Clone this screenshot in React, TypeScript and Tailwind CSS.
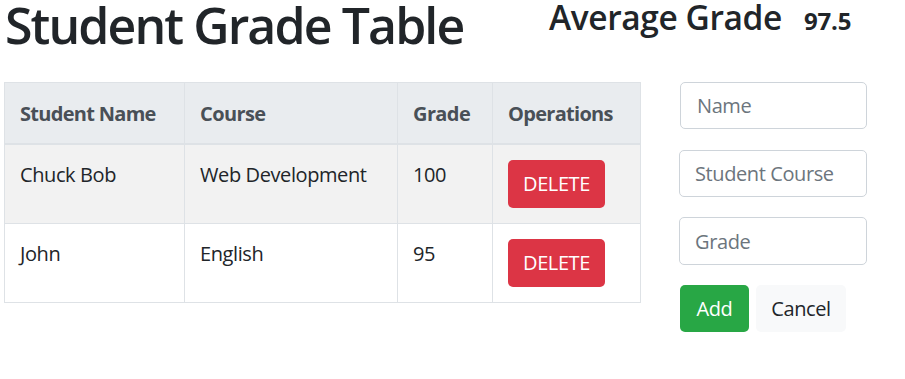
import React from "react";

const rows = [
  { name: "Chuck Bob", course: "Web Development", grade: "100" },
  { name: "John", course: "English", grade: "95" },
];

export default function App() {
  return (
    <div className="w-[905px] min-h-[379px] bg-white text-[#212529]" style={{ fontFamily: '"Open Sans", "Noto Sans", sans-serif' }}>
      <div className="flex items-start h-[82px]">
        <h1 className="ml-[5px] w-[544px] text-[50px] leading-[50px] font-semibold tracking-[-1.9px] whitespace-nowrap">Student Grade Table</h1>
        <div className="flex items-baseline whitespace-nowrap">
          <h3 className="text-[33.5px] leading-[34px] font-semibold tracking-[-0.4px]">Average Grade</h3>
          <span className="ml-[22px] text-[24px] font-bold leading-[34px] tracking-[-0.2px]">97.5</span>
        </div>
      </div>
      <div className="flex items-start">
        <table className="ml-[4px] w-[637px] border-collapse text-[20px] leading-[30px] tracking-[-0.4px]">
          <thead>
            <tr className="bg-[#e9ecef] text-[#495057]">
              <th className="w-[180px] text-left font-bold border border-[#dee2e6] border-b-2 px-[15px] pt-[16px] pb-[14px] tracking-[-0.7px]">Student Name</th>
              <th className="w-[213px] text-left font-bold border border-[#dee2e6] border-b-2 px-[15px] pt-[16px] pb-[14px] tracking-[-0.6px]">Course</th>
              <th className="w-[95px] text-left font-bold border border-[#dee2e6] border-b-2 px-[15px] pt-[16px] pb-[14px] tracking-[-0.6px]">Grade</th>
              <th className="text-left font-bold border border-[#dee2e6] border-b-2 px-[15px] pt-[16px] pb-[14px] tracking-[-0.7px]">Operations</th>
            </tr>
          </thead>
          <tbody>
            {rows.map((r, i) => (
              <tr key={r.name} className={i === 0 ? "bg-[#f2f2f2]" : "bg-white"}>
                <td className="align-top border border-[#dee2e6] px-[15px] py-[15px]">{r.name}</td>
                <td className="align-top border border-[#dee2e6] px-[15px] py-[15px]">{r.course}</td>
                <td className="align-top border border-[#dee2e6] px-[15px] py-[15px]">{r.grade}</td>
                <td className="align-top border border-[#dee2e6] px-[15px] py-[15px]">
                  <button className="h-[48px] w-[97px] rounded-[5px] bg-[#dc3545] text-white text-[20px] leading-[30px] tracking-[-0.4px]">DELETE</button>
                </td>
              </tr>
            ))}
          </tbody>
        </table>
        <div className="ml-[38px] flex flex-col w-[188px] tracking-[-0.4px]">
          <input placeholder="Name" className="h-[47px] w-[187px] ml-[1px] border border-[#ced4da] rounded-[5px] px-[16px] text-[20px] placeholder:text-[#6c757d] outline-none" />
          <input placeholder="Student Course" className="mt-[21px] h-[47px] w-[188px] border border-[#ced4da] rounded-[5px] px-[15px] text-[20px] placeholder:text-[#6c757d] outline-none" />
          <input placeholder="Grade" className="mt-[20px] h-[48px] w-[188px] border border-[#ced4da] rounded-[5px] px-[15px] text-[20px] placeholder:text-[#6c757d] outline-none" />
          <div className="mt-[20px] flex gap-[7px] ml-[1px]">
            <button className="h-[47px] w-[69px] rounded-[5px] bg-[#28a745] text-white text-[20px]">Add</button>
            <button className="h-[47px] w-[90px] rounded-[5px] bg-[#f8f9fa] text-[#212529] text-[20px]">Cancel</button>
          </div>
        </div>
      </div>
    </div>
  );
}
